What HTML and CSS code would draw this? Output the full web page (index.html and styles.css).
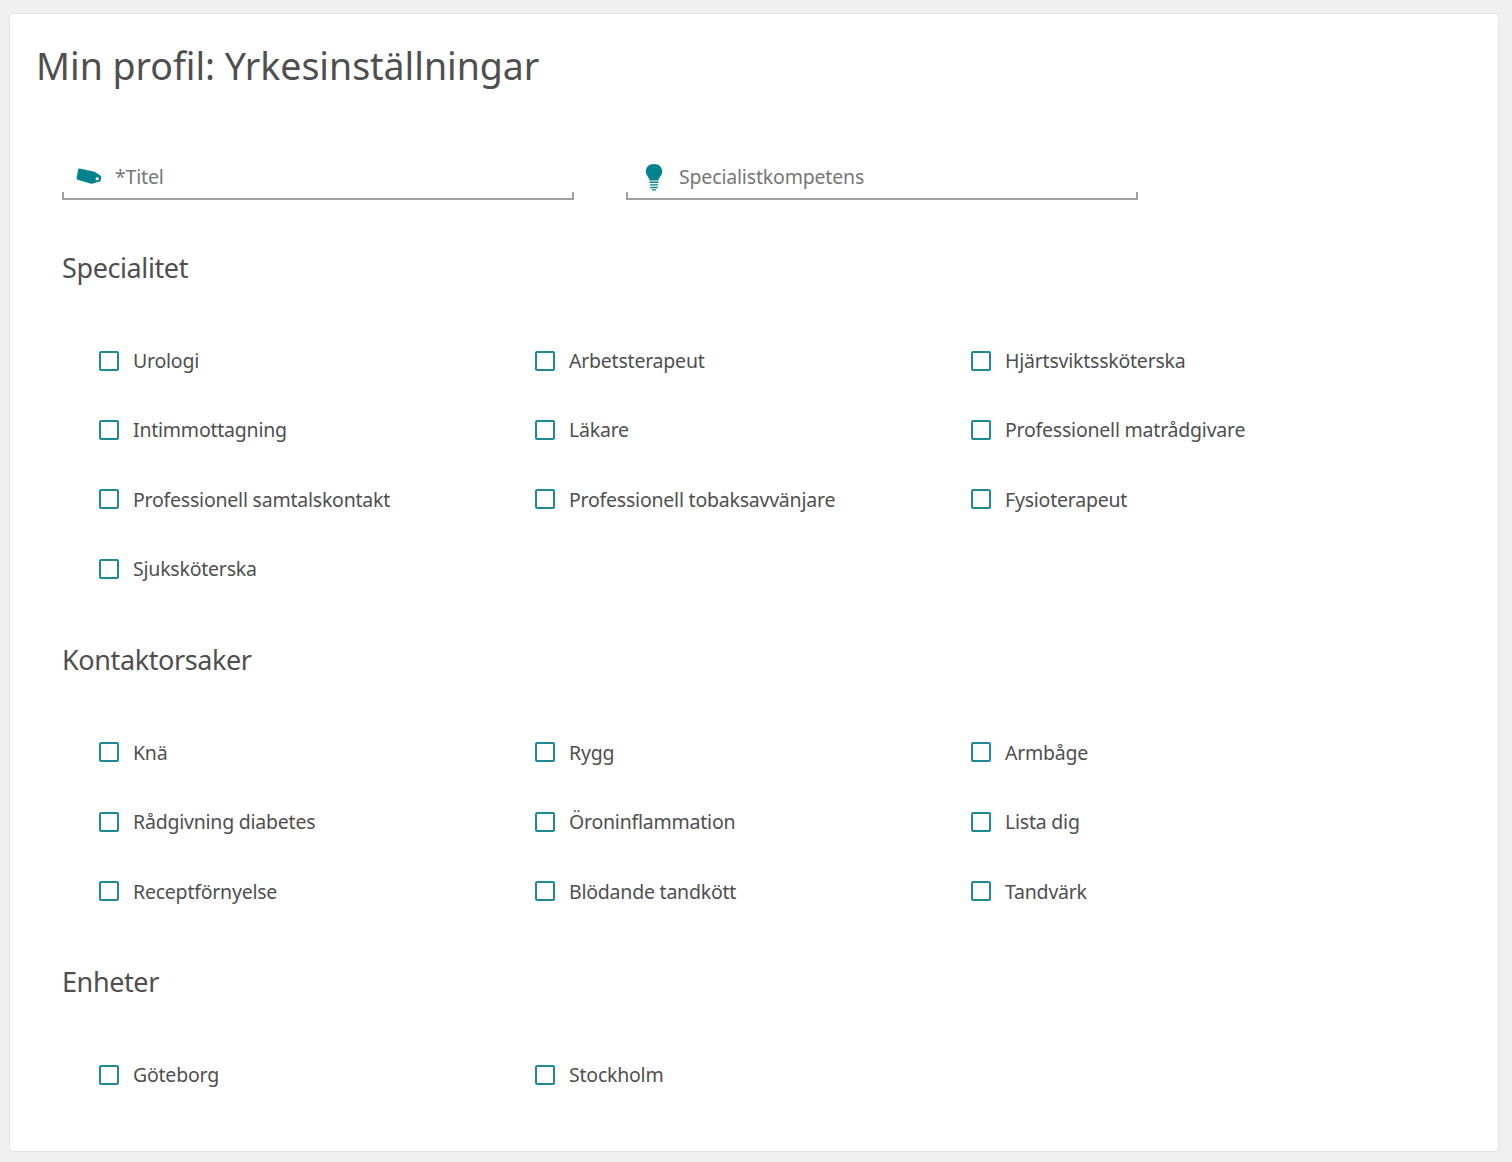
FILE: index.html
```html
<!DOCTYPE html>
<html lang="sv">
  <head>
    <meta charset="UTF-8" />
    <title>Min profil: Yrkesinställningar</title>
    <link rel="stylesheet" href="styles.css">
  </head>
  <body>
    <main class="card">
      <h1 class="page-title">Min profil: Yrkesinställningar</h1>

      <div class="fields">
        <div class="field">
          <svg class="field-icon" viewBox="0 0 26 18" width="26" height="18">
            <path fill-rule="evenodd" d="M3.6 0.4 L16.6 3.2 Q18.2 3.5 19.4 4.3 L24.6 7.8 Q25.6 8.5 25.3 9.6 L24.6 12.4 Q24.3 13.6 23 13.8 L17 15.6 Q15.8 15.9 14.4 15.5 L1.6 11.8 Q0.2 11.4 0.6 9.8 L2.2 1.6 Q2.5 0.2 3.6 0.4 Z M21.2 9.2 a1.6 1.6 0 1 0 0.01 0 Z"/>
          </svg>
          <span class="field-label">*Titel</span>
        </div>
        <div class="field">
          <svg class="field-icon" viewBox="-1 0 26 28" width="26" height="28">
            <path d="M13 1 C7.6 1 4.8 4.6 4.8 8.4 C4.8 12.2 7.8 13.8 8.6 17.4 L17.4 17.4 C18.2 13.8 21.2 12.2 21.2 8.4 C21.2 4.6 18.4 1 13 1 Z"/>
            <path d="M8.6 18.6 H17.4 V20 H8.6 Z M8.8 21.2 H17.2 V22.6 H8.8 Z M9.4 23.8 H16.6 V25.2 H9.4 Z M11 26.2 H15 V27.6 H11 Z"/>
          </svg>
          <span class="field-label">Specialistkompetens</span>
        </div>
      </div>

      <section class="group">
        <h2 class="group-title">Specialitet</h2>
        <div class="options">
          <label class="option"><span class="box"></span>Urologi</label>
          <label class="option"><span class="box"></span>Arbetsterapeut</label>
          <label class="option"><span class="box"></span>Hjärtsviktssköterska</label>
          <label class="option"><span class="box"></span>Intimmottagning</label>
          <label class="option"><span class="box"></span>Läkare</label>
          <label class="option"><span class="box"></span>Professionell matrådgivare</label>
          <label class="option"><span class="box"></span>Professionell samtalskontakt</label>
          <label class="option"><span class="box"></span>Professionell tobaksavvänjare</label>
          <label class="option"><span class="box"></span>Fysioterapeut</label>
          <label class="option"><span class="box"></span>Sjuksköterska</label>
        </div>
      </section>

      <section class="group">
        <h2 class="group-title">Kontaktorsaker</h2>
        <div class="options">
          <label class="option"><span class="box"></span>Knä</label>
          <label class="option"><span class="box"></span>Rygg</label>
          <label class="option"><span class="box"></span>Armbåge</label>
          <label class="option"><span class="box"></span>Rådgivning diabetes</label>
          <label class="option"><span class="box"></span>Öroninflammation</label>
          <label class="option"><span class="box"></span>Lista dig</label>
          <label class="option"><span class="box"></span>Receptförnyelse</label>
          <label class="option"><span class="box"></span>Blödande tandkött</label>
          <label class="option"><span class="box"></span>Tandvärk</label>
        </div>
      </section>

      <section class="group">
        <h2 class="group-title">Enheter</h2>
        <div class="options">
          <label class="option"><span class="box"></span>Göteborg</label>
          <label class="option"><span class="box"></span>Stockholm</label>
        </div>
      </section>
    </main>
  </body>
</html>
```

FILE: styles.css
```css
:root {
  --teal: #00838f;
  --box-teal: #1f8a96;
  --text: #4f4f4f;
  --muted: #777;
}

html,
body {
  height: 100%;
}

body {
  margin: 0;
  padding: 13px 13px 10px 9px;
  box-sizing: border-box;
  background-color: #f0f0f0;
  font-family: "Noto Sans", "Open Sans", sans-serif;
  color: var(--text);
}

.card {
  height: 1139px;
  box-sizing: border-box;
  padding: 0 0 0 27px;
  background-color: white;
  border: 1px solid #e4e4e4;
  border-radius: 4px;
}

.page-title {
  margin: 0 0 0 -1px;
  padding-top: 24px;
  height: 55px;
  font-size: 37.5px;
  line-height: 55px;
  font-weight: 400;
  letter-spacing: -0.03px;
}

.fields {
  display: flex;
  gap: 52px;
  margin: 58px 0 0 25px;
}

.field {
  width: 512px;
  height: 49px;
  box-sizing: border-box;
  display: flex;
  align-items: center;
  padding: 4px 0 0 14px;
  border-bottom: 2px solid #a0a0a0;
  position: relative;
}

.field::before,
.field::after {
  content: "";
  position: absolute;
  bottom: 0;
  width: 2px;
  height: 6px;
  background-color: #a0a0a0;
}

.field::before {
  left: 0;
}

.field::after {
  right: 0;
}

.field-icon {
  fill: var(--teal);
  width: 26px;
  flex: none;
}

.field-label {
  margin-left: 13px;
  font-size: 19.5px;
  color: var(--muted);
  letter-spacing: -0.17px;
}

.group {
  margin-left: 25px;
}

.group-title {
  margin: 0;
  padding-top: 38.5px;
  font-size: 27px;
  line-height: 36px;
  font-weight: 400;
  letter-spacing: -0.4px;
}

.group:first-of-type .group-title {
  padding-top: 50px;
}

.options {
  display: grid;
  grid-template-columns: repeat(3, 436px);
  grid-auto-rows: 69.33px;
  margin: 40px 0 0 37px;
}

.option {
  display: flex;
  align-items: center;
  font-size: 19.5px;
  letter-spacing: -0.22px;
}

.box {
  width: 20px;
  height: 20px;
  box-sizing: border-box;
  margin-right: 14px;
  border: 2px solid var(--box-teal);
  border-radius: 2px;
  flex: none;
}
```
